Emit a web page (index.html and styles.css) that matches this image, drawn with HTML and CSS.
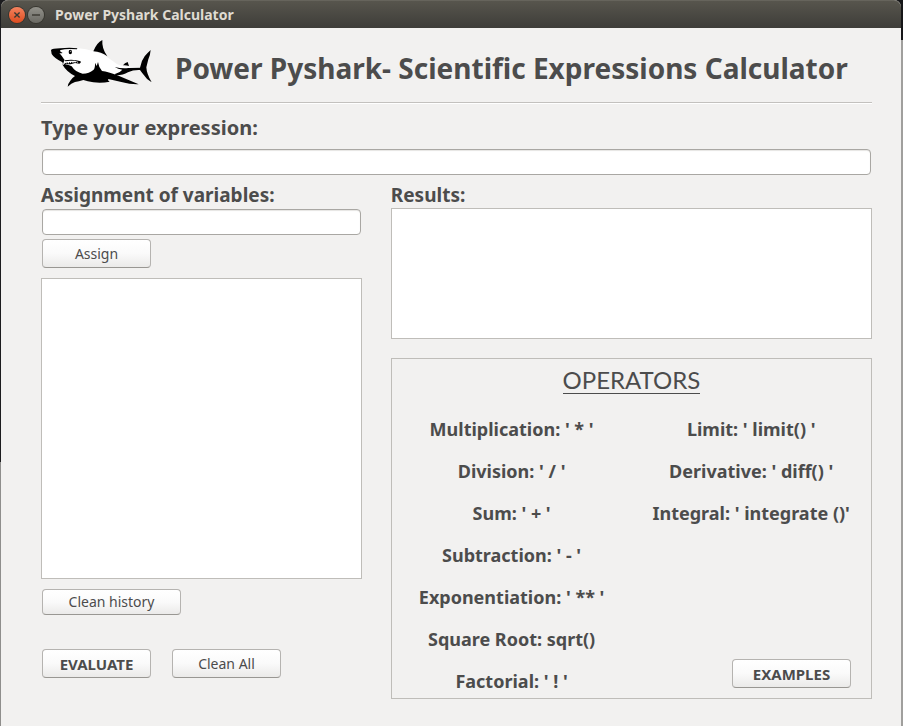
FILE: index.html
```html
<!DOCTYPE html>
<html lang="en">
<head>
<meta charset="utf-8">
<title>Power Pyshark Calculator</title>
<link rel="stylesheet" href="styles.css">
</head>
<body>
<div class="window">
  <header class="titlebar">
    <button class="control control-close" type="button" aria-label="Close">
      <svg viewBox="0 0 16 16"><path d="M5.4 5.4l5.2 5.2M10.6 5.4l-5.2 5.2"/></svg>
    </button>
    <button class="control" type="button" aria-label="Minimize">
      <svg viewBox="0 0 16 16"><path d="M4 8h8"/></svg>
    </button>
    <span class="titlebar-text">Power Pyshark Calculator</span>
  </header>
  <main class="content">
    <div class="banner">
      <svg class="shark" viewBox="0 0 375 195" aria-hidden="true">
        <path d="M34 58Q45 53 110 54Q140 57 162 64Q184 70 200 80L232 103Q245 109 262 110L304 111L298 118L232 135L200 132Q180 145 140 142Q100 138 74 106L56 80Z" fill="#fff"/>
        <path d="M160 64Q170 38 187 30Q185 56 202 79Q184 66 160 64Z"/>
        <path d="M33 60Q36 56 60 55Q90 52 112 55L111 58Q80 55 62 60Q56 63 68 69Q63 71 58 69Q68 80 72 88L76 92L72 99L72 104Q85 103 95 109Q106 127 128 131Q148 131 160 120Q166 114 165 98L170 108L174 96Q176 112 186 123Q205 125 232 136L296 163Q272 164 244 156L205 147L204 151L209 155Q186 160 160 157Q142 154 130 150Q116 154 105 156Q94 160 83 170Q83 162 91 152Q96 144 105 138Q80 126 68 105Q70 98 66 96Q42 84 35 72Z"/>
        <path d="M224 111Q245 116 265 114L300 113Q304 92 314 79Q322 69 332 60Q331 74 325 88L319 112Q320 132 335 157Q319 148 309 132Q303 124 300 120Q280 119 264 127Q248 137 226 136L225 132Q240 128 247 119Q234 118 224 111Z"/>
        <path d="M249 106Q254 99 263 96L267 108Q258 105 249 106Z"/>
        <ellipse cx="91" cy="66" rx="5" ry="7"/>
        <circle cx="92" cy="64" r="1.5" fill="#fff"/>
        <path d="M68 106l5-15Q100 86 120 95L119 99L76 101Z" fill="#fff"/>
        <path d="M74 91Q100 86 122 94L122 98L118 101L105 99L92 103L77 103L74 108L70 106L76 98L79 101L81 96L85 101L88 96L92 100L95 95L99 99L102 95L105 98L109 95L113 98L115 96L104 92L90 92L76 94Z"/>
      </svg>
      <h1 class="heading">Power Pyshark- Scientific Expressions Calculator</h1>
    </div>
    <div class="expression">
      <label class="label label-large" for="expression">Type your expression:</label>
      <input class="field" id="expression" type="text">
    </div>
    <div class="columns">
      <section class="variables">
        <label class="label" for="variable">Assignment of variables:</label>
        <div class="entry">
          <input class="field" id="variable" type="text">
          <button class="button" type="button">Assign</button>
        </div>
        <textarea class="area history" aria-label="History" readonly></textarea>
        <div class="actions">
          <button class="button button-history" type="button">Clean history</button>
        </div>
        <div class="actions actions-main">
          <button class="button button-strong" type="button">EVALUATE</button>
          <button class="button" type="button">Clean All</button>
        </div>
      </section>
      <section class="output">
        <label class="label" for="results">Results:</label>
        <textarea class="area results" id="results" readonly></textarea>
        <div class="operators">
          <h2 class="operators-title">OPERATORS</h2>
          <div class="operators-grid">
            <ul class="list">
              <li>Multiplication: ' * '</li>
              <li>Division: ' / '</li>
              <li>Sum: ' + '</li>
              <li>Subtraction: ' - '</li>
              <li>Exponentiation: ' ** '</li>
              <li>Square Root: sqrt()</li>
              <li>Factorial: ' ! '</li>
            </ul>
            <div class="functions">
              <ul class="list">
                <li>Limit: ' limit() '</li>
                <li>Derivative: ' diff() '</li>
                <li>Integral: ' integrate ()'</li>
              </ul>
              <button class="button button-strong button-examples" type="button">EXAMPLES</button>
            </div>
          </div>
        </div>
      </section>
    </div>
  </main>
</div>
</body>
</html>
```
FILE: styles.css
```css
* {
  box-sizing: border-box;
}

body {
  margin: 0;
  min-height: 100vh;
  display: flex;
  padding: 0 2px 0 1px;
  background:
    linear-gradient(#1c1c1e 462px, #8f8e8c 462px) left / 50% 100% no-repeat,
    linear-gradient(#161618 40px, #a09f9d 40px) right / 50% 100% no-repeat;
  color: #4c4c4c;
  font-family: "Noto Sans", "Open Sans", sans-serif;
  font-size: 14px;
}

.window {
  flex: 1;
  display: flex;
  flex-direction: column;
  min-width: 0;
  background: #f2f1f0;
  border-radius: 7px 7px 0 0;
}

.titlebar {
  display: flex;
  align-items: center;
  gap: 3px;
  height: 28px;
  padding: 0 8px;
  border-top: 1px solid #66645c;
  border-radius: 7px 7px 0 0;
  background: linear-gradient(#57554d, #3e3d39);
  color: #dfdbd2;
}

.titlebar-text {
  margin-left: 8px;
  font-weight: 700;
}

.control {
  width: 16px;
  height: 16px;
  padding: 0;
  border: 0;
  border-radius: 50%;
  background: linear-gradient(#92918a, #6b6a64);
  box-shadow: 0 0 0 1px #37362f;
}

.control-close {
  background: linear-gradient(#f5835f, #dd4c1f);
}

.control svg {
  display: block;
  fill: none;
  stroke: #3a3932;
  stroke-width: 1.4;
}

.content {
  flex: 1;
  display: flex;
  flex-direction: column;
  padding: 0 29px 27px 40px;
}

.banner {
  display: flex;
  align-items: center;
  gap: 10px;
  height: 75px;
  border-bottom: 1px solid #c3c1be;
  box-shadow: 0 1px #fff;
}

.shark {
  flex: none;
  width: 125px;
  height: 65px;
  margin: 0 0 5px -1px;
}

.heading {
  margin: 0;
  padding-top: 5px;
  font-size: 28px;
  line-height: 40px;
  white-space: nowrap;
}

.label {
  display: block;
  font-size: 19px;
  font-weight: 700;
  line-height: 26px;
}

.label-large {
  margin-bottom: 8px;
  font-size: 20px;
}

.expression {
  padding: 12px 1px 7px;
}

.expression .label {
  margin-left: -1px;
}

.field {
  display: block;
  width: 100%;
  height: 26px;
  padding: 0 6px;
  border: 1px solid #a9a7a3;
  border-radius: 4px;
  background: #fff;
  box-shadow: inset 0 1px 1px #e6e5e3;
  font: inherit;
}

.columns {
  flex: 1;
  display: grid;
  grid-template-columns: 2fr 3fr;
  gap: 29px;
}

.variables {
  display: flex;
  flex-direction: column;
  padding-bottom: 21px;
}

.entry {
  display: flex;
  flex-direction: column;
  align-items: flex-start;
  gap: 4px;
  padding: 1px 1px 0;
}

.button {
  width: 109px;
  height: 29px;
  padding: 0;
  border: 1px solid #b5b3b0;
  border-bottom-color: #999793;
  border-radius: 4px;
  background: linear-gradient(#fff, #fafafa 50%, #ebeae9);
  color: #4c4c4c;
  font: inherit;
  line-height: 20px;
}

.button-strong {
  font-size: 15px;
  font-weight: 700;
}

.area {
  display: block;
  width: 100%;
  padding: 4px;
  border: 1px solid #bfbdb9;
  background: #fff;
  font: inherit;
  resize: none;
}

.history {
  flex: 1;
  min-height: 200px;
  margin: 10px 0;
}

.button-history {
  width: 139px;
  height: 26px;
}

.actions {
  display: flex;
  gap: 21px;
  padding: 0 1px;
}

.actions-main {
  margin-top: 34px;
}

.output {
  display: flex;
  flex-direction: column;
}

.results {
  height: 131px;
  margin-bottom: 19px;
}

.operators {
  flex: 1;
  padding: 8px 0 4px;
  border: 1px solid #bfbdb9;
}

.operators-title {
  width: fit-content;
  margin: 0 auto 23px;
  border-bottom: 1px solid #4c4c4c;
  font-family: Lato, sans-serif;
  font-size: 24px;
  font-weight: 400;
  line-height: 26px;
}

.operators-grid {
  display: grid;
  grid-template-columns: 1fr 1fr;
}

.list {
  display: flex;
  flex-direction: column;
  gap: 18px;
  margin: 0;
  padding: 0;
  list-style: none;
  font-size: 18px;
  font-weight: 700;
  line-height: 24px;
  text-align: center;
}

.functions {
  display: flex;
  flex-direction: column;
}

.button-examples {
  width: 119px;
  margin: auto 20px 5px auto;
}
```
